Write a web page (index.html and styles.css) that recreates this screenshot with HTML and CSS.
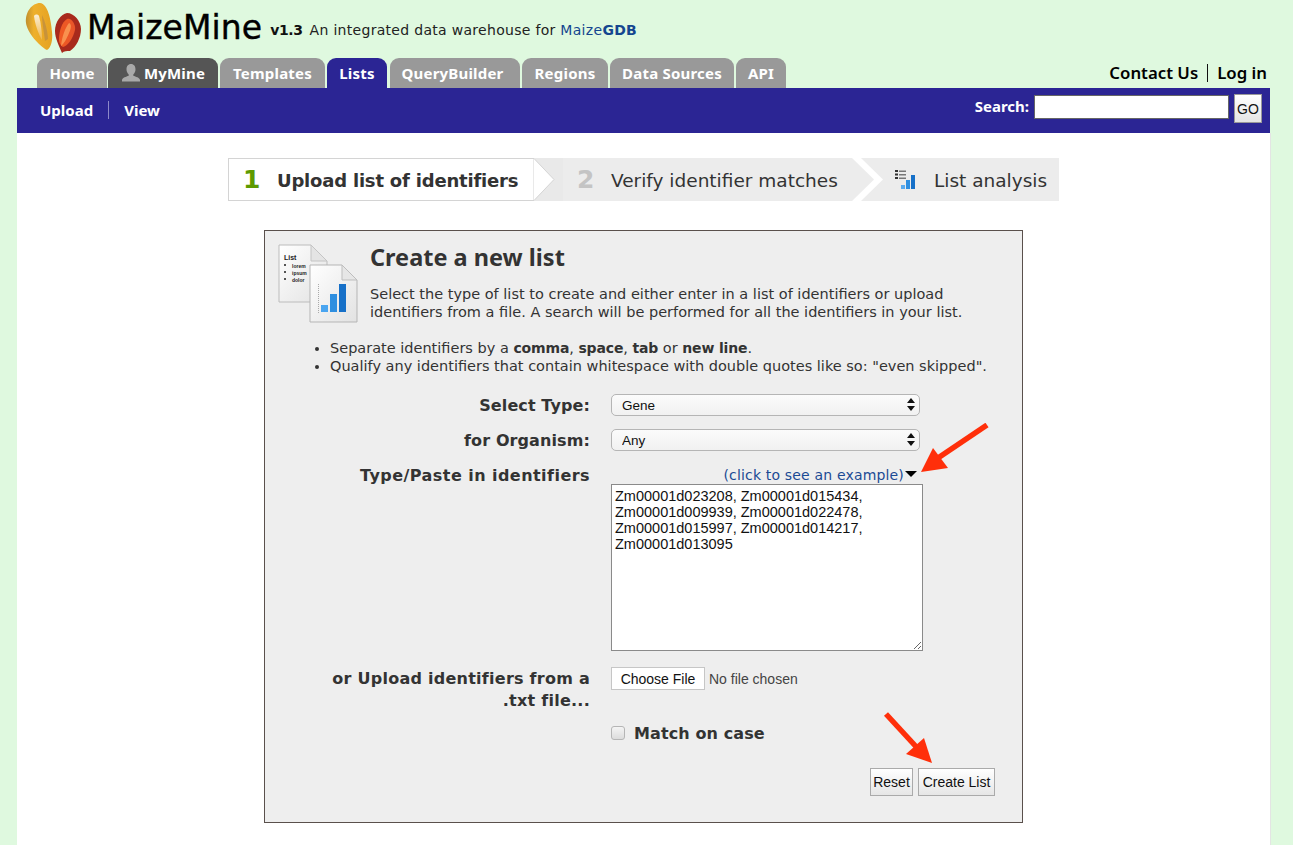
FILE: index.html
```html
<!DOCTYPE html>
<html lang="en">
<head>
<meta charset="utf-8">
<title>MaizeMine - Create a new list</title>
<link rel="stylesheet" href="styles.css">
</head>
<body>
<header class="masthead">
  <div class="brand">
    <svg class="logo" viewBox="0 0 57 52" width="57" height="52" aria-hidden="true">
      <defs>
        <linearGradient id="kY" x1="0" y1="0" x2="1" y2="0"><stop offset="0" stop-color="#c08f2e"/><stop offset=".3" stop-color="#eeb02c"/><stop offset="1" stop-color="#e5a222"/></linearGradient>
        <linearGradient id="kS" x1="0" y1="0" x2="0" y2="1"><stop offset="0" stop-color="#fbeed4"/><stop offset="1" stop-color="#eeb850"/></linearGradient>
        <linearGradient id="kO" x1="0" y1="0" x2="1" y2="0"><stop offset="0" stop-color="#f05a22"/><stop offset="1" stop-color="#e8552a"/></linearGradient>
      </defs>
      <path d="M15 1C7 1 0 10 1 21c1 9 13 23 21 27 4-2 6-10 5-18C26 18 23 2 15 1z" fill="url(#kY)"/>
      <path d="M17 13c3 6 6 17 6 24l-3 2c-1-9-3-18-3-26z" fill="#c8933a"/>
      <path d="M9 14c1-2 4-2 5 0 2 7 3 16 3 24-3-5-7-15-8-24z" fill="url(#kS)"/>
      <path d="M42 11c-6 1-12 9-12 18 0 7 4 15 7 22 2-2 5-2 8-2 6-4 11-13 11-22 0-8-7-16-14-16z" fill="#a82a1c"/>
      <path d="M42 17c-5 3-8 12-8 21 0 3 2 6 4 7 5-1 10-9 12-17 1-6-4-13-8-11z" fill="url(#kO)"/>
      <path d="M44 21c-4 5-7 14-8 23 3-2 6-8 8-13 2-4 3-9 0-10z" fill="#f9914e"/>
    </svg>
    <span class="brand-name">MaizeMine</span>
    <span class="brand-version">v1.3</span>
    <span class="brand-tag">An integrated data warehouse for <a class="brand-link" href="#">Maize<b>GDB</b></a></span>
  </div>
  <div class="tabbar">
    <nav class="tabs">
      <a class="tab tab-home" href="#">Home</a>
      <a class="tab tab-mine" href="#">
        <svg class="mine-icon" viewBox="0 0 20 20" width="20" height="20" aria-hidden="true"><path d="M10 1c3 0 4.500 2.400 4.500 5.200 0 2.300-1 4.200-2.200 5.200v1.400c2.500 1 6.200 1.800 6.700 4.200v1.500H1v-1.500c.5-2.400 4.200-3.200 6.700-4.200v-1.400C6.500 10.400 5.500 8.500 5.500 6.200 5.500 3.400 7 1 10 1z" fill="#a9a9a9"/></svg>MyMine</a>
      <a class="tab tab-templates" href="#">Templates</a>
      <a class="tab tab-lists" href="#">Lists</a>
      <a class="tab tab-qb" href="#">QueryBuilder</a>
      <a class="tab tab-regions" href="#">Regions</a>
      <a class="tab tab-sources" href="#">Data Sources</a>
      <a class="tab tab-api" href="#">API</a>
    </nav>
    <div class="account"><a class="account-link" href="#">Contact Us</a><a class="account-link account-last" href="#">Log in</a></div>
  </div>
</header>

<div class="subnav">
  <div class="subnav-links"><a class="subnav-link" href="#">Upload</a><a class="subnav-link subnav-last" href="#">View</a></div>
  <form class="search"><label class="search-label" for="q">Search:</label><input class="search-input" id="q" type="text"><button class="btn-go" type="button">GO</button></form>
</div>

<main class="content">
  <div class="steps">
    <div class="step step-active"><span class="step-num num-green">1</span><span class="step-text step-text-bold">Upload list of identifiers</span></div>
    <svg class="step-arrow" viewBox="0 0 30 43" width="30" height="43" aria-hidden="true"><rect width="30" height="43" fill="#e9e9e9"/><path d="M0 .5h1L21 21.500 1 42.500H0z" fill="#fff" stroke="#d4d4d4"/></svg>
    <div class="step step-two"><span class="step-num num-gray">2</span><span class="step-text">Verify identifier matches</span></div>
    <svg class="step-arrow-two" viewBox="0 0 31 43" width="31" height="43" aria-hidden="true"><rect width="31" height="43" fill="#ececec"/><path d="M0 0h9l22 21.500L9 43H0l22-21.500z" fill="#fff"/></svg>
    <div class="step step-three">
      <svg class="analysis-icon" viewBox="0 0 22 22" width="22" height="22" aria-hidden="true">
        <path d="M0 1h3v2H0zM0 4.500h3v2H0zM0 8h3v2H0z" fill="#333"/>
        <path d="M4 1.500h7V3H4zM4 5h7v1.500H4zM4 8.500h7V10H4z" fill="#777"/>
        <rect x="6" y="16" width="4" height="4" fill="#5aabef"/><rect x="11" y="11" width="4" height="9" fill="#2f8fe0"/><rect x="16" y="6" width="4" height="14" fill="#1670c8"/>
      </svg>
      <span class="step-text">List analysis</span>
    </div>
  </div>

  <section class="card">
    <div class="card-head">
      <div class="doc-icons" aria-hidden="true">
        <svg class="doc doc-back" viewBox="0 0 50 59" width="50" height="59">
          <defs><linearGradient id="dG" x1="0" y1="0" x2="1" y2="1"><stop offset="0" stop-color="#fff"/><stop offset="1" stop-color="#e2e2e2"/></linearGradient></defs>
          <path d="M1 1h32l16 16v41H1z" fill="url(#dG)" stroke="#bcbcbc"/><path d="M33 1v16h16z" fill="#e4e4e4" stroke="#c4c4c4"/>
          <path d="M6 20h2v2H6zM6 27h2v2H6zM6 34h2v2H6z" fill="#555"/>
        </svg>
        <span class="doc-text doc-t1">List</span><span class="doc-text doc-t2">lorem</span><span class="doc-text doc-t3">ipsum</span><span class="doc-text doc-t4">dolor</span>
        <svg class="doc doc-front" viewBox="0 0 49 60" width="49" height="60">
          <path d="M1 1h32l15 15v42H1z" fill="url(#dG)" stroke="#b5b5b5"/><path d="M33 1v15h15z" fill="#e6e6e6" stroke="#bdbdbd"/>
          <path d="M9.500 20v29" stroke="#aaa" stroke-dasharray="1 1"/>
          <rect x="12" y="41" width="7" height="7" fill="#4aa5f0"/><rect x="21" y="30" width="7" height="18" fill="#2f8fe0"/><rect x="30" y="20" width="7" height="28" fill="#1670c8"/>
        </svg>
      </div>
      <div class="card-intro">
        <h1 class="card-title">Create a new list</h1>
        <p class="card-desc">Select the type of list to create and either enter in a list of identifiers or upload identifiers from a file. A search will be performed for all the identifiers in your list.</p>
      </div>
    </div>
    <ul class="hints">
      <li>Separate identifiers by a <b class="hint-strong">comma</b>, <b class="hint-strong">space</b>, <b class="hint-strong">tab</b> or <b class="hint-strong">new line</b>.</li>
      <li>Qualify any identifiers that contain whitespace with double quotes like so: "even skipped".</li>
    </ul>

    <form class="list-form">
      <label class="f-label label-select" for="t">Select Type:</label>
      <div class="select-wrap"><select class="select" id="t"><option>Gene</option></select><svg class="select-caret" viewBox="0 0 8 13" width="8" height="13" aria-hidden="true"><path d="M4 0l4 5H0zM4 13L0 8h8z" fill="#111"/></svg></div>

      <label class="f-label label-select" for="o">for Organism:</label>
      <div class="select-wrap"><select class="select" id="o"><option>Any</option></select><svg class="select-caret" viewBox="0 0 8 13" width="8" height="13" aria-hidden="true"><path d="M4 0l4 5H0zM4 13L0 8h8z" fill="#111"/></svg></div>

      <label class="f-label label-wide" for="ids">Type/Paste in identifiers</label>
      <div class="paste-field">
        <div class="example"><a class="example-link" href="#">(click to see an example)</a><span class="example-caret"></span></div>
        <textarea class="ids" id="ids">Zm00001d023208, Zm00001d015434, Zm00001d009939, Zm00001d022478, Zm00001d015997, Zm00001d014217, Zm00001d013095</textarea>
      </div>

      <label class="f-label label-file" for="f">or Upload identifiers from a .txt file...</label>
      <div class="file-field"><input class="file" id="f" type="file"></div>

      <div class="match-field"><input class="check" id="m" type="checkbox"><label class="check-label" for="m">Match on case</label></div>

      <div class="actions"><button class="btn btn-reset" type="reset">Reset</button><button class="btn btn-create" type="button">Create List</button></div>
    </form>

    <svg class="callout callout-a" viewBox="0 0 70 50" width="70" height="50" aria-hidden="true"><path d="M68 2L16 37" stroke="#ff2f0a" stroke-width="5.500" fill="none"/><path d="M2 49L14 25 29 45z" fill="#ff2f0a"/></svg>
    <svg class="callout callout-b" viewBox="0 0 50 52" width="50" height="52" aria-hidden="true"><path d="M3 2L38 40" stroke="#ff2f0a" stroke-width="5.500" fill="none"/><path d="M49 51L41 26 23 42z" fill="#ff2f0a"/></svg>
  </section>
</main>
</body>
</html>
```

FILE: styles.css
```css
* { box-sizing: border-box; }
html, body { margin: 0; padding: 0; }
body {
  background: #dff9df;
  font-family: "DejaVu Sans", sans-serif;
  color: #333;
  min-height: 100vh;
  display: flex;
  flex-direction: column;
  overflow: hidden;
}
a { text-decoration: none; color: inherit; }

/* header */
.masthead { height: 88px; padding: 2px 26px 0 25px; display: flex; flex-direction: column; }
.brand { height: 56px; display: flex; align-items: flex-start; }
.logo { flex: none; display: block; }
.brand-name { margin: 7px 0 0 5px; font-size: 33px; line-height: 38px; color: #000; letter-spacing: .1px; -webkit-text-stroke: .4px #000; }
.brand-version { margin: 18px 0 0 8px; font-size: 14px; line-height: 20px; font-weight: 700; color: #111; letter-spacing: -.4px; }
.brand-tag { margin: 18px 0 0 7px; font-size: 14px; line-height: 20px; color: #222; letter-spacing: .3px; }
.brand-link { color: #14468f; }
.tabbar { flex: 1; display: flex; justify-content: space-between; align-items: flex-end; padding-left: 12px; }
.tabs { display: flex; }
.tab {
  height: 30px; border-radius: 9px 9px 0 0; background: #999; color: #fff;
  font-size: 15px; font-weight: 700; line-height: 30px; text-align: center; letter-spacing: .2px;
  font-family: "Noto Sans", sans-serif; margin-right: 2px;
}
.tab-home { width: 70px; margin-right: 1px; }
.tab-mine { width: 110px; background: #555; display: flex; align-items: center; justify-content: center; gap: 3px; }
.mine-icon { display: block; }
.tab-templates { width: 105px; }
.tab-lists { width: 60px; background: #2b2594; margin-right: 3px; }
.tab-qb { width: 130px; padding-right: 5px; }
.tab-regions { width: 86px; }
.tab-sources { width: 124px; }
.tab-api { width: 50px; margin-right: 0; }
.account { display: flex; padding-bottom: 6px; font-size: 16.800px; line-height: 18px; color: #000; }
.account-link { font-family: "Noto Sans", sans-serif; font-weight: 600; padding-right: 9px; border-right: 1px solid #111; }
.account-last { padding: 0 0 0 9px; border: 0; }

/* blue bar */
.subnav { margin: 0 23px 0 17px; height: 45px; background: #2b2594; display: flex; justify-content: space-between; padding: 6px 8px 0 23px; }
.subnav-links { display: flex; padding-top: 7px; }
.subnav-link { height: 18px; line-height: 18px; font-size: 15px; font-weight: 700; color: #fff; font-family: "Noto Sans", sans-serif; padding-right: 15px; border-right: 1px solid #8d89c9; }
.subnav-last { padding: 0 0 0 15px; border: 0; }
.search { display: flex; align-items: flex-start; }
.search-label { color: #fff; font-family: "Noto Sans", sans-serif; font-weight: 700; font-size: 15px; line-height: 24px; margin-right: 5px; }
.search-input { width: 195px; height: 24px; margin: 1px 5px 0 0; border: 1px solid #666; background: #fff; padding: 0; }
.btn-go { width: 28px; height: 29px; padding: 0; border: 1px solid #999; background: linear-gradient(#fff, #e4e4e4); font: 14px "Liberation Sans", sans-serif; color: #111; }

/* content */
.content { flex: 1; margin: 0 23px 0 17px; background: #fff; padding-top: 25px; box-shadow: 1px 0 0 #e4e4e4; }
.steps { display: flex; justify-content: center; height: 43px; }
.step { height: 43px; display: flex; align-items: center; background: #ececec; }
.step-active { width: 305px; background: #fff; border: 1px solid #d4d4d4; border-right: 0; padding-left: 14px; }
.step-two { width: 289px; padding-left: 14px; }
.step-three { width: 176px; padding-left: 12px; }
.step-arrow, .step-arrow-two { display: block; flex: none; }
.step-num { font-size: 25px; font-weight: 700; width: 34px; }
.num-green { color: #5d9a00; }
.num-gray { color: #c4c4c4; }
.step-text { font-size: 18.500px; color: #333; padding-top: 1px; }
.step-text-bold { font-weight: 700; font-size: 18px; letter-spacing: -.2px; }
.analysis-icon { display: block; margin-right: 17px; }

/* card */
.card { position: relative; width: 759px; height: 593px; margin: 29px auto 0; background: #eee; border: 1px solid #5a504c; padding: 12px 30px 0 13px; }
.card-head { display: flex; }
.doc-icons { position: relative; flex: none; width: 92px; height: 80px; margin-top: 1px; }
.doc { position: absolute; display: block; }
.doc-back { left: 0; top: 0; }
.doc-front { left: 31px; top: 20px; }
.doc-text { position: absolute; font: 700 5px/6px "Liberation Sans", sans-serif; color: #222; }
.doc-t1 { left: 6px; top: 11px; font-size: 7px; }
.doc-t2 { left: 14px; top: 19px; }
.doc-t3 { left: 14px; top: 26px; }
.doc-t4 { left: 14px; top: 33px; }
.card-title { margin: 0; font-family: "Noto Sans", sans-serif; font-size: 23.500px; line-height: 28px; font-weight: 700; color: #333; }
.card-desc { margin: 14px 0 0; font-size: 14.500px; line-height: 18px; color: #333; }
.hints { margin: 15px 0 0; padding: 0 0 0 52px; font-size: 14.500px; line-height: 18px; }
.hint-strong { font-size: 14px; letter-spacing: -.15px; }

.list-form { display: grid; grid-template-columns: 270px 312px; column-gap: 21px; margin: 19px 0 0 42px; }
.f-label { font-size: 16px; font-weight: 700; line-height: 24px; text-align: right; color: #333; letter-spacing: .1px; }
.label-select { margin-bottom: 11px; }
.label-wide { letter-spacing: .45px; }
.label-file { margin-top: 17px; line-height: 22px; letter-spacing: .25px; }
.select-wrap { position: relative; width: 309px; height: 22px; margin-bottom: 13px; }
.select { appearance: none; display: block; width: 100%; height: 22px; border: 1px solid #b5b5b5; border-radius: 5px; background: linear-gradient(#fbfbfb, #f1f1f1); padding: 0 0 0 10px; font: 13.500px "Liberation Sans", sans-serif; color: #111; }
.select-caret { position: absolute; right: 5px; top: 4px; pointer-events: none; }
.paste-field { display: flex; flex-direction: column; }
.example { display: flex; justify-content: flex-end; align-items: center; height: 20px; padding: 2px 6px 0 0; }
.example-link { color: #1b4a94; font-size: 14px; letter-spacing: .17px; }
.example-caret { width: 0; height: 0; border: 6px solid transparent; border-top: 6px solid #000; border-bottom: 0; margin: -2px 0 0 1px; }
.ids { display: block; width: 312px; height: 167px; border: 1px solid #8a8a8a; background: #fff; padding: 3px; font: 14.500px/16px "Liberation Sans", sans-serif; color: #111; resize: both; margin: 0; }
.file-field { margin-top: 16px; height: 23px; }
.file { display: block; width: 250px; font: 14px "Liberation Sans", sans-serif; color: #444; }
.file::file-selector-button { height: 23px; width: 94px; margin-right: 4px; border: 1px solid #c6c6c6; background: #fff; font: 14px "Liberation Sans", sans-serif; color: #111; padding: 0; }
.match-field { grid-column: 2; display: flex; align-items: center; gap: 9px; margin-top: 10px; height: 22px; }
.check { appearance: none; width: 14px; height: 14px; margin: 0; border: 1px solid #b5b5b5; border-radius: 3px; background: linear-gradient(#f4f4f4, #dcdcdc); flex: none; }
.check-label { font-size: 16px; font-weight: 700; color: #333; letter-spacing: .1px; }
.actions { grid-column: 2; display: flex; justify-content: flex-end; gap: 5px; margin: 24px -72px 0 0; }
.btn { height: 28px; padding: 0; border: 1px solid #aaa; background: linear-gradient(#fff, #e6e6e6); font: 14px "Liberation Sans", sans-serif; color: #111; }
.btn-reset { width: 43px; }
.btn-create { width: 77px; }
.callout { position: absolute; display: block; }
.callout-a { left: 654px; top: 192px; }
.callout-b { left: 618px; top: 481px; }
```
